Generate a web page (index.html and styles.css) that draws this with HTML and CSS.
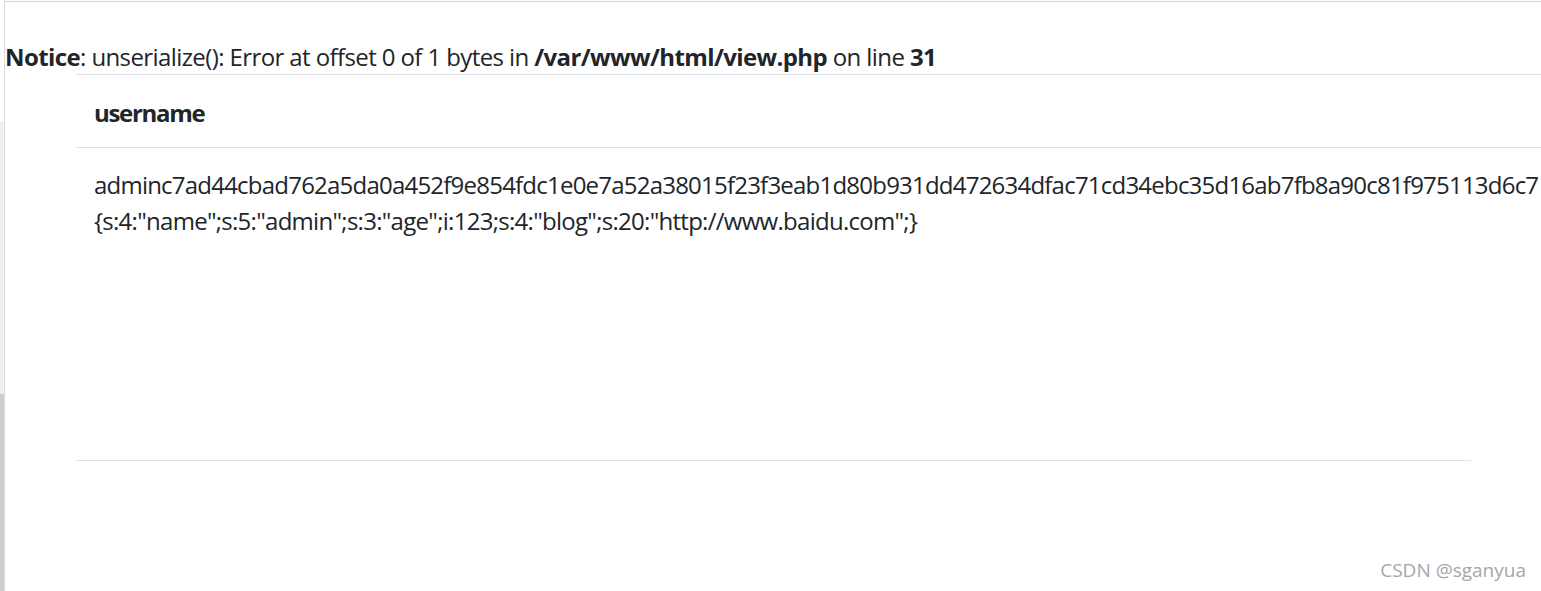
FILE: index.html
```html
<!DOCTYPE html>
<html>
<head>
<meta charset="utf-8">
<link rel="stylesheet" href="styles.css">
</head>
<body>
<div class="frame">
  <div class="rail">
    <div class="rail-top"></div>
    <div class="rail-mid"></div>
    <div class="rail-bot"></div>
  </div>
  <main class="main">
    <p class="notice"><b>Notice</b>: unserialize(): Error at offset 0 of 1 bytes in <b>/var/www/html/view.php</b> on line <b>31</b></p>
    <div class="container">
      <div class="table">
        <div class="th">username</div>
        <div class="td">
          <div class="line line1">adminc7ad44cbad762a5da0a452f9e854fdc1e0e7a52a38015f23f3eab1d80b931dd472634dfac71cd34ebc35d16ab7fb8a90c81f975113d6c7</div>
          <div class="line">{s:4:"name";s:5:"admin";s:3:"age";i:123;s:4:"blog";s:20:"http://www.baidu.com";}</div>
        </div>
      </div>
      <div class="rule"></div>
    </div>
  </main>
</div>
<div class="watermark">CSDN @sganyua</div>
</body>
</html>
```

FILE: styles.css
```css
html, body {
  margin: 0;
  padding: 0;
  background: #fff;
  overflow: hidden;
}
body {
  font-family: "Open Sans", "Noto Sans", sans-serif;
  color: #212529;
  width: 1541px;
  height: 591px;
  position: relative;
}
.frame {
  display: flex;
  height: 590px;
  border-top: 1px solid #d4d4d4;
  margin-top: 1px;
  box-sizing: border-box;
}
.rail {
  width: 4px;
  flex: none;
  display: flex;
  flex-direction: column;
  border-right: 1px solid #dcdcdc;
  margin-top: -2px;
}
.rail-top { height: 121px; background: #fff; }
.rail-mid { height: 273px; background: #f0f0f0; }
.rail-bot { flex: 1; background: #cdcdcd; }
.main {
  flex: 1;
  min-width: 0;
  padding-left: 0;
  overflow: hidden;
}
.notice {
  margin: 37px 0 0;
  font-size: 24px;
  line-height: 36px;
  white-space: nowrap;
  letter-spacing: -0.6px;
}
.notice b { font-weight: 700; }
.container {
  padding-left: 71px;
  margin-top: -1px;
}
.table {
  border-top: 1px solid #dee2e6;
  width: 1600px;
}
.th {
  font-weight: 700;
  font-size: 24px;
  line-height: 36px;
  padding: 20px 18px 16px;
  border-bottom: 1px solid #dee2e6;
  letter-spacing: -1.3px;
}
.td {
  height: 312px;
  padding: 19px 18px 0;
  box-sizing: border-box;
  font-size: 24px;
  line-height: 36px;
  letter-spacing: -0.72px;
}
.line { white-space: nowrap; }
.line1 { letter-spacing: -0.78px; }
.rule {
  width: 1395px;
  border-top: 1px solid #dee2e6;
}
.watermark {
  position: absolute;
  right: 15px;
  bottom: 8px;
  font-size: 19px;
  color: #a6a6a6;
  font-family: "Open Sans", sans-serif;
}
```
